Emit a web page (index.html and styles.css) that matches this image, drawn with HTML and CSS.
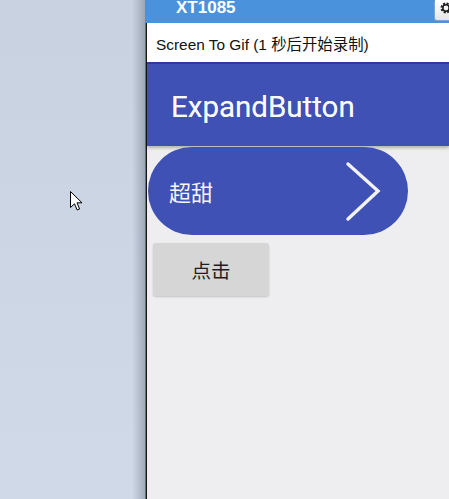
FILE: index.html
```html
<!DOCTYPE html>
<html>
<head>
<meta charset="utf-8">
<link rel="stylesheet" href="styles.css">
</head>
<body>
<div class="screen">
  <div class="desktop">
    <svg class="cursor" width="14" height="22" viewBox="0 0 14 22">
      <path d="M0.5 0.5 L0.5 16.5 L4.5 12.8 L7.2 19 L9.6 18 L7 11.8 L12 11.8 Z" fill="#fff" stroke="#000" stroke-width="1" stroke-linejoin="miter"/>
    </svg>
  </div>
  <div class="window">
    <div class="titlebar">
      <span class="title">XT1085</span>
      <span class="gearbtn">
        <svg width="14" height="14" viewBox="0 0 14 14"><circle cx="7" cy="7" r="4.2" fill="none" stroke="#222" stroke-width="2.6" stroke-dasharray="2 1.3"/><circle cx="7" cy="7" r="3.2" fill="none" stroke="#222" stroke-width="1.6"/></svg>
      </span>
    </div>
    <div class="client">
      <div class="client-inner">
        <div class="header">Screen To Gif (1 秒后开始录制)</div>
        <div class="statusline"></div>
        <div class="appbar"><span class="apptitle">ExpandButton</span></div>
        <div class="content">
          <div class="pill">
            <span class="pill-text">超甜</span>
            <svg class="chev" width="40" height="64" viewBox="0 0 40 64"><path d="M4 4 L34 31 L4 59" fill="none" stroke="#f2f2f2" stroke-width="3.4" stroke-linecap="round" stroke-linejoin="miter"/></svg>
          </div>
          <div class="btn">点击</div>
        </div>
      </div>
    </div>
  </div>
</div>
</body>
</html>
```

FILE: styles.css
```css
html, body {
  margin: 0;
  padding: 0;
  width: 449px;
  height: 499px;
  overflow: hidden;
}
.screen {
  display: flex;
  width: 449px;
  height: 499px;
}
.desktop {
  position: relative;
  width: 145px;
  flex: none;
  background: linear-gradient(to right, rgba(0,0,0,0) 0, rgba(0,0,0,0) 132px, rgba(40,50,70,0.12) 138px, rgba(40,50,70,0.28) 145px),
              linear-gradient(to bottom, #c8d2e0, #d0d9e7);
}
.cursor {
  position: absolute;
  left: 70px;
  top: 191px;
}
.window {
  flex: 1;
  display: flex;
  flex-direction: column;
  overflow: hidden;
}
.titlebar {
  height: 23px;
  flex: none;
  background: #4a92dc;
  display: flex;
  align-items: flex-start;
  padding-left: 31px;
}
.title {
  font-family: "Liberation Sans", Arial, sans-serif;
  font-weight: bold;
  font-size: 17px;
  line-height: 17px;
  margin-top: -1px;
  color: #fff;
}
.gearbtn {
  margin-left: auto;
  width: 18px;
  height: 20px;
  flex: none;
  margin-right: -4px;
  background: linear-gradient(#ffffff, #e6e6e6);
  border-radius: 0 0 0 2px;
  box-shadow: -1px 1px 0 #7aa6d6;
  display: flex;
  justify-content: flex-start;
  padding-left: 4px;
  padding-top: 1px;
  box-sizing: border-box;
}
.client {
  flex: 1;
  border-left: 1px solid #2d7bd6;
  display: flex;
}
.client-inner {
  flex: 1;
  border-left: 1px solid #151515;
  display: flex;
  flex-direction: column;
  background: #eeeef0;
}
.header {
  height: 39px;
  background: #ffffff;
  font-family: "Liberation Sans", Arial, "Noto Sans CJK SC", sans-serif;
  font-size: 15.4px;
  color: #111;
  padding-left: 9px;
  display: flex;
  align-items: center;
  padding-top: 1px;
  box-sizing: border-box;
}
.statusline {
  height: 2px;
  background: #2f3b98;
}
.appbar {
  height: 82px;
  background: #3f51b5;
  display: flex;
  align-items: center;
  padding-left: 24px;
  box-shadow: 0 2px 3px rgba(0,0,0,0.25);
  position: relative;
}
.apptitle {
  font-family: Roboto, "Noto Sans", sans-serif;
  font-size: 29.5px;
  font-weight: 400;
  color: #fafafa;
  padding-top: 4px;
  text-shadow: 0 0 0.6px rgba(255,255,255,0.6);
}
.content {
  display: flex;
  flex-direction: column;
  align-items: flex-start;
  position: relative;
}
.pill {
  margin-left: 1px;
  margin-top: 1px;
  width: 260px;
  height: 88px;
  border-radius: 44px;
  background: #3f51b5;
  display: flex;
  align-items: center;
  box-sizing: border-box;
  padding-left: 21px;
  position: relative;
}
.pill-text {
  font-family: "Noto Sans CJK SC", sans-serif;
  font-size: 22px;
  color: #f4f4f4;
}
.chev {
  margin-left: auto;
  margin-right: 24px;
  margin-top: 1px;
}
.btn {
  margin-left: 6px;
  margin-top: 8px;
  width: 116px;
  height: 53px;
  background: #d6d6d6;
  border-radius: 3px;
  box-shadow: 0 1px 2px rgba(0,0,0,0.18);
  display: flex;
  align-items: center;
  justify-content: center;
  font-family: "Noto Sans CJK SC", sans-serif;
  font-size: 19.5px;
  color: #1e1e1e;
}
```
